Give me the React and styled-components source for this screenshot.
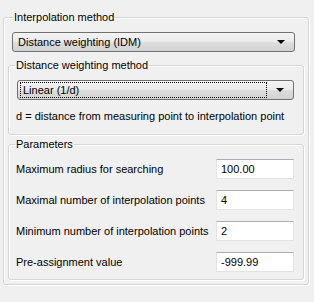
import React from "react";
import styled, { createGlobalStyle } from "styled-components";

const GlobalStyle = createGlobalStyle`
  html, body {
    margin: 0;
    padding: 0;
    background: #f0f0f0;
  }
  body {
    width: 314px;
    height: 302px;
    overflow: hidden;
    font-family: Tahoma, "Liberation Sans", Arial, sans-serif;
    font-size: 11px;
    color: #000;
  }
`;

const Panel = styled.div`
  padding: 11px 5px 0 3px;
`;

const Group = styled.fieldset`
  margin: ${p => p.$margin || "0"};
  padding: ${p => p.$padding || "0"};
  border: 1px solid #d6d6d6;
  border-radius: 3px;
  box-shadow: 1px 1px 0 #ffffff, inset 1px 1px 0 #ffffff;
  min-width: 0;
`;

const Legend = styled.legend`
  font-size: 11px;
  line-height: 13px;
  padding: 0 1px;
  margin-left: ${p => p.$indent || "5px"};
  white-space: nowrap;
`;

const Combo = styled.div`
  display: flex;
  align-items: center;
  height: 20px;
  box-sizing: border-box;
  margin: ${p => p.$margin || "0"};
  border: 1px solid #707070;
  border-radius: 3px;
  background: linear-gradient(#f4f4f4 0%, #ececec 45%, #dcdcdc 55%, #d2d2d2 100%);
  padding: 0 2px;
`;

const ComboText = styled.span`
  flex: 1;
  height: 14px;
  line-height: 14px;
  padding-left: 2px;
  white-space: nowrap;
  border: 1px dotted ${p => (p.$focused ? "#000" : "transparent")};
`;

const Arrow = styled.span`
  width: 0;
  height: 0;
  margin: 0 7px 0 9px;
  border-left: 4px solid transparent;
  border-right: 4px solid transparent;
  border-top: 4px solid #000;
`;

const Note = styled.div`
  margin: 10px 0 0 7px;
  white-space: nowrap;
`;

const Row = styled.div`
  display: flex;
  align-items: center;
  justify-content: space-between;
  height: 20px;
  margin: ${p => (p.$first ? "8px" : "11px")} 9px 0 7px;
  white-space: nowrap;
`;

const Field = styled.div`
  width: 78px;
  height: 20px;
  box-sizing: border-box;
  border: 1px solid #e3e3e3;
  border-top-color: #abadb3;
  background: #fff;
  padding: 0 4px;
  line-height: 18px;
`;

const params = [
  { label: "Maximum radius for searching", value: "100.00" },
  { label: "Maximal number of interpolation points", value: "4" },
  { label: "Minimum number of interpolation points", value: "2" },
  { label: "Pre-assignment value", value: "-999.99" },
];

const App = () => {
  return (
    <Panel>
      <GlobalStyle />
      <Group $padding="0 4px 4px 4px">
        <Legend $indent="5px">Interpolation method</Legend>
        <Combo $margin="8px 9px 0 4px">
          <ComboText>Distance weighting (IDM)</ComboText>
          <Arrow />
        </Combo>
        <Group $margin="7px 0 0 0" $padding="0 0 12px 0">
          <Legend $indent="6px">Distance weighting method</Legend>
          <Combo $margin="8px 9px 0 8px">
            <ComboText $focused>Linear (1/d)</ComboText>
            <Arrow />
          </Combo>
          <Note>d = distance from measuring point to interpolation point</Note>
        </Group>
        <Group $margin="3px 0 0 0" $padding="0 0 7px 0">
          <Legend $indent="6px">Parameters</Legend>
          {params.map((p, i) => (
            <Row key={p.label} $first={i === 0}>
              <span>{p.label}</span>
              <Field>{p.value}</Field>
            </Row>
          ))}
        </Group>
      </Group>
    </Panel>
  );
};

export default App;
